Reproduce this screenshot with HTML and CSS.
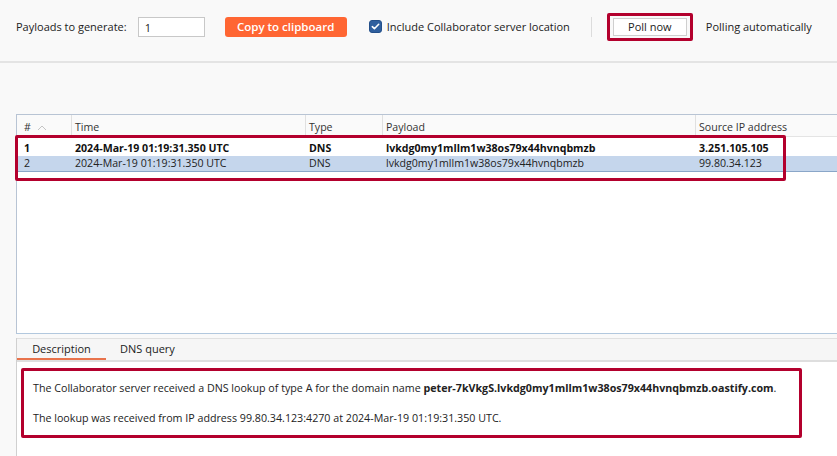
FILE: index.html
```html
<!DOCTYPE html>
<html>
<head>
<meta charset="utf-8">
<link rel="stylesheet" href="styles.css">
</head>
<body>
<div class="toolbar">
  <span class="label">Payloads to generate:</span>
  <div class="input">1</div>
  <button class="copy">Copy to clipboard</button>
  <span class="check"><svg width="13" height="13" viewBox="0 0 13 13"><rect x="0.5" y="0.5" width="12" height="12" rx="2.5" fill="#2f5f9e" stroke="#24508a"/><path d="M3.3 6.7 L5.4 8.7 L9.7 4.3" fill="none" stroke="#fff" stroke-width="1.6" stroke-linecap="round" stroke-linejoin="round"/></svg></span>
  <span class="label">Include Collaborator server location</span>
  <span class="sep"></span>
  <span class="poll-wrap"><button class="poll">Poll now</button></span>
  <span class="label">Polling automatically</span>
</div>
<div class="spacer"></div>
<div class="table-panel">
  <div class="thead">
    <div class="c c-num">#<svg class="chev" width="10" height="6" viewBox="0 0 10 6"><path d="M1 5 L5 1 L9 5" fill="none" stroke="#c4c4c4" stroke-width="1"/></svg></div>
    <div class="c c-time">Time</div>
    <div class="c c-type">Type</div>
    <div class="c c-payload">Payload</div>
    <div class="c c-ip">Source IP address</div>
  </div>
  <div class="rows">
    <div class="row bold">
      <div class="c c-num">1</div>
      <div class="c c-time">2024-Mar-19 01:19:31.350 UTC</div>
      <div class="c c-type">DNS</div>
      <div class="c c-payload">lvkdg0my1mllm1w38os79x44hvnqbmzb</div>
      <div class="c c-ip">3.251.105.105</div>
    </div>
    <div class="row selected">
      <div class="c c-num">2</div>
      <div class="c c-time">2024-Mar-19 01:19:31.350 UTC</div>
      <div class="c c-type">DNS</div>
      <div class="c c-payload">lvkdg0my1mllm1w38os79x44hvnqbmzb</div>
      <div class="c c-ip">99.80.34.123</div>
    </div>
    <div class="hl hl-rows"></div>
  </div>
</div>
<div class="detail">
  <div class="tabs">
    <div class="tab active">Description</div>
    <div class="tab">DNS query</div>
  </div>
  <div class="content">
    <p>The Collaborator server received a DNS lookup of type A for the domain name <b>peter-7kVkgS.lvkdg0my1mllm1w38os79x44hvnqbmzb.oastify.com</b>.</p>
    <p>The lookup was received from IP address 99.80.34.123:4270 at 2024-Mar-19 01:19:31.350 UTC.</p>
    <div class="hl hl-desc"></div>
  </div>
</div>
</body>
</html>
```
FILE: styles.css
```css
* { box-sizing: border-box; }
html, body { margin: 0; padding: 0; }
body {
  width: 837px;
  height: 456px;
  overflow: hidden;
  background: #f9f9f9;
  font-family: "Open Sans", "Noto Sans", sans-serif;
  font-size: 11px;
  color: #222;
}
.toolbar {
  height: 63px;
  display: flex;
  align-items: center;
  padding: 0 0 8px 16px;
  border-bottom: 2px solid #e4e4e4;
}
.label { white-space: nowrap; }
.input {
  width: 67px;
  height: 20px;
  margin-left: 11px;
  border: 1px solid #c8c8c8;
  background: #fff;
  padding: 2px 6px;
  line-height: 15px;
}
.copy {
  margin-left: 20px;
  width: 122px;
  height: 20px;
  border: none;
  border-radius: 3px;
  background: #ff6633;
  color: #fff;
  font-family: inherit;
  font-size: 11.5px;
  font-weight: 600;
  padding: 0;
}
.check { margin-left: 22px; margin-right: 5px; display: flex; }
.sep {
  width: 1px;
  height: 20px;
  background: #dcdcdc;
  margin: 0 15px 0 21px;
}
.poll-wrap {
  border: 3px solid #b3002d;
  border-radius: 2px;
  padding: 2px 3px;
  display: flex;
}
.poll {
  width: 74px;
  height: 18px;
  border: 1px solid #cfcfcf;
  background: #fff;
  font-family: inherit;
  font-size: 11px;
  color: #222;
  padding: 0;
}
.poll-wrap + .label { margin-left: 13px; }
.spacer { height: 51px; }
.table-panel {
  margin-left: 16px;
  height: 220px;
  border-left: 1px solid #b8c4d4;
  border-top: 1px solid #b8c4d4;
  border-bottom: 1px solid #b2c8de;
  background: #fff;
  font-size: 10.6px;
}
.thead {
  display: flex;
  height: 22px;
  background: #fafafa;
  border-bottom: 1px solid #e4e4e4;
  color: #333;
}
.thead .c {
  border-right: 1px solid #e0e0e0;
  line-height: 25px;
}
.c { padding-left: 3px; white-space: nowrap; overflow: hidden; }
.c-num { width: 55px; padding-left: 7px; display: flex; align-items: center; }
.thead .c-num { align-items: flex-start; }
.chev { margin-left: 6px; margin-top: 10px; }
.c-time { width: 234px; }
.c-type { width: 77px; }
.c-payload { width: 313px; }
.c-ip { flex: 1; border-right: none !important; }
.rows { position: relative; padding-top: 4px; }
.row { display: flex; height: 15px; line-height: 15px; }
.row.bold { font-weight: 700; color: #111; }
.row.selected { background: #c5d6ec; border-bottom: 1px solid #8aa6c8; height: 16px; }
.hl {
  position: absolute;
  border: 3px solid #b3002d;
  border-radius: 2px;
  pointer-events: none;
}
.hl-rows { left: -2px; top: -2px; width: 771px; height: 46px; }
.detail { margin-top: 4px; margin-left: 16px; border-left: 1px solid #d0d0d0; }
.tabs {
  display: flex;
  height: 24px;
  background: #f6f6f6;
  border-top: 1px solid #e0e0e0;
  border-bottom: 2px solid #dedede;
  align-items: stretch;
}
.tab {
  padding: 0 14px;
  line-height: 20px;
  color: #222;
}
.tab.active {
  width: 89px;
  text-align: center;
  border-bottom: 2px solid #e8734c;
}
.content {
  position: relative;
  background: #fff;
  height: 100px;
  padding: 19px 0 0 16px;
  color: #222;
  font-size: 10.7px;
}
.content p { margin: 0 0 16px 0; line-height: 14px; }
.hl-desc { left: 4px; top: 6px; width: 781px; height: 70px; }
```
